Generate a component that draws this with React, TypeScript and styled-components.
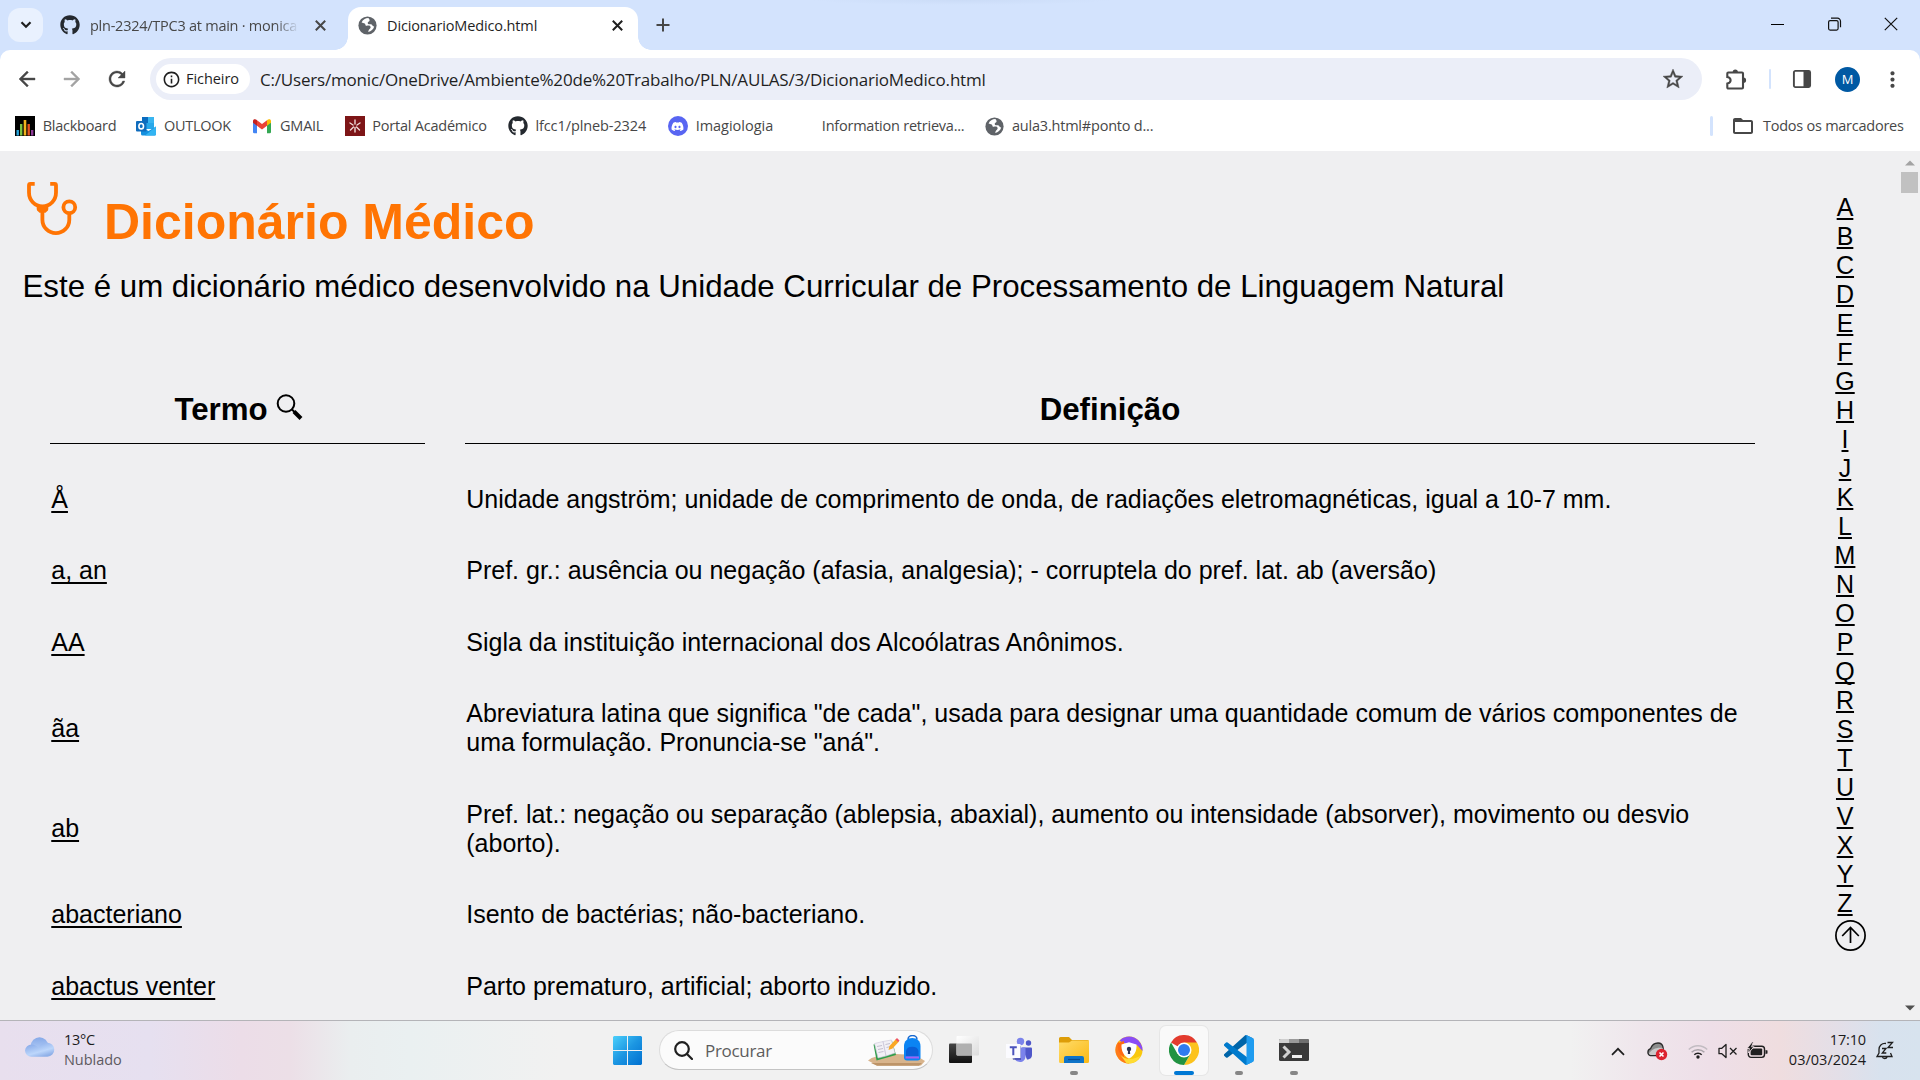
import React from "react";
import styled, { createGlobalStyle, css } from "styled-components";
import { FaGithub, FaDiscord } from "react-icons/fa";
import {
  MdArrowBack,
  MdArrowForward,
  MdRefresh,
  MdStarBorder,
  MdInfoOutline,
  MdMoreVert,
  MdFolderOpen,
} from "react-icons/md";

const UI_FONT = '"Open Sans", "Noto Sans", sans-serif';
const PAGE_FONT = '"Liberation Sans", Arial, sans-serif';

const GlobalStyle = createGlobalStyle`
  *, *::before, *::after { box-sizing: border-box; }
  html, body { margin: 0; padding: 0; overflow: hidden; }
  svg { display: block; flex: none; }
`;

const Screen = styled.div`
  width: 1920px;
  height: 1080px;
  display: flex;
  flex-direction: column;
  overflow: hidden;
  background: #fff;
  font-family: ${UI_FONT};
  color: #1f1f1f;
`;

/* ---------- text ---------- */

const Label = styled.span<{ $w?: number; $size?: number; $ls?: number; $color?: string; $weight?: number }>`
  display: block;
  flex: none;
  ${(p) => p.$w && css`width: ${p.$w}px;`}
  font-size: ${(p) => p.$size ?? 14.5}px;
  letter-spacing: ${(p) => p.$ls ?? -0.3}px;
  color: ${(p) => p.$color ?? "#474747"};
  font-weight: ${(p) => p.$weight ?? 400};
  line-height: 20px;
  white-space: nowrap;
`;

/* ---------- tab strip ---------- */

const TabStrip = styled.header`
  height: 50px;
  flex: none;
  display: flex;
  background: radial-gradient(ellipse 150px 5px at 962px 0, #cbdcf7, #d3e3fd) #d3e3fd;
  padding-left: 8px;
`;

const TabSearch = styled.button`
  width: 35px;
  height: 34px;
  margin-top: 8px;
  border: 0;
  padding: 0;
  border-radius: 12px;
  background: #e9f1fe;
  display: grid;
  place-items: center;
`;

const Tab = styled.div<{ $active?: boolean }>`
  position: relative;
  display: flex;
  align-items: center;
  height: 43px;
  margin-top: 7px;
  padding-bottom: 7px;
  ${(p) =>
    p.$active
      ? css`
          width: 290px;
          padding-left: 10px;
          background: #fff;
          border-radius: 13px 13px 0 0;
          &::before,
          &::after {
            content: "";
            position: absolute;
            bottom: 0;
            width: 13px;
            height: 13px;
          }
          &::before {
            left: -13px;
            background: radial-gradient(circle at 0 0, transparent 12.5px, #fff 13px);
          }
          &::after {
            right: -13px;
            background: radial-gradient(circle at 100% 0, transparent 12.5px, #fff 13px);
          }
        `
      : css`
          width: 305px;
          padding-left: 17px;
        `}
`;

const TabTitle = styled(Label)<{ $fade?: boolean }>`
  width: 211px;
  margin-left: 10px;
  padding-top: 1px;
  overflow: hidden;
  ${(p) => p.$fade && css`mask-image: linear-gradient(to right, #000 185px, transparent 209px);`}
`;

const TabClose = styled.span<{ $left: number }>`
  margin-left: ${(p) => p.$left}px;
`;

const NewTab = styled.span`
  margin: 18px 0 0 18px;
`;

const WindowButtons = styled.div`
  margin-left: auto;
  width: 149px;
  display: flex;
  justify-content: space-between;
  padding: 17px 22px 0 0;
`;

/* ---------- toolbar ---------- */

const ToolbarBack = styled.div`
  flex: none;
  background: #d3e3fd;
`;

const boldIcon = css`
  svg path:not([fill="none"]) {
    stroke: currentColor;
    stroke-width: 0.4px;
  }
`;

const Toolbar = styled.div`
  height: 58px;
  display: flex;
  align-items: center;
  background: #fff;
  border-radius: 10px 10px 0 0;
`;

const NavButtons = styled.nav`
  width: 150px;
  display: flex;
  align-items: center;
  gap: 21px;
  padding-left: 15px;
  color: #474747;
  svg path[fill="none"] {
    stroke: none;
  }
  ${boldIcon}
`;

const Omnibox = styled.div`
  width: 1552px;
  height: 42px;
  border-radius: 21px;
  background: #ebeef8;
  display: flex;
  align-items: center;
  padding: 0 17px 0 6px;
  color: #474747;
`;

const FileChip = styled.span`
  width: 94px;
  height: 30px;
  border-radius: 15px;
  background: #fff;
  display: flex;
  align-items: center;
  gap: 5px;
  padding-left: 6px;
  margin-right: 10px;
  color: #1f1f1f;
`;

const UrlText = styled(Label)`
  flex: 1;
  line-height: 24px;
  padding-top: 1px;
`;

const StarButton = styled.span`
  ${boldIcon}
`;

const ToolbarActions = styled.div`
  flex: 1;
  display: flex;
  align-items: center;
  color: #474747;
  padding-left: 22px;
`;

const Separator = styled.span<{ $w?: number; $ml: number; $mr: number }>`
  flex: none;
  width: ${(p) => p.$w ?? 2}px;
  height: 20px;
  border-radius: 2px;
  background: #d3e3fd;
  margin: 0 ${(p) => p.$mr}px 0 ${(p) => p.$ml}px;
`;

const Avatar = styled.span`
  width: 25px;
  height: 25px;
  border-radius: 50%;
  background: #0059a3;
  color: #fff;
  font-size: 13px;
  display: grid;
  place-items: center;
  margin: 0 20px 0 23px;
`;

const Bookmarks = styled.div`
  height: 43px;
  flex: none;
  display: flex;
  align-items: center;
  background: #fff;
  padding: 0 0 7px 15px;
`;

const Bookmark = styled.a`
  display: flex;
  align-items: center;
  gap: 7.7px;
  margin-right: 19.5px;
`;

const IconSlot = styled.span`
  width: 20px;
  height: 20px;
  display: grid;
  place-items: center;
`;

const AllBookmarks = styled.div`
  margin-left: auto;
  width: 210px;
  display: flex;
  align-items: center;
  color: #474747;
`;

const AllBookmarksLabel = styled(Label)`
  margin-left: 8px;
`;

/* ---------- page ---------- */

const Page = styled.main`
  height: 869px;
  flex: none;
  display: flex;
  overflow: hidden;
  background: #efeff1;
  font-family: ${PAGE_FONT};
  color: #000;
`;

const Content = styled.div`
  width: 1795px;
  flex: none;
`;

const Title = styled.h1`
  display: flex;
  align-items: flex-start;
  margin: 0;
  padding: 28px 0 0 25px;
  height: 118px;
  color: #ff7403;
  font-size: 50px;
  line-height: 58px;
  font-weight: 700;
`;

const TitleText = styled.span`
  margin: 14px 0 0 25px;
`;

const Subtitle = styled.p`
  margin: 0;
  padding: 0 0 0 22.5px;
  font-size: 31.25px;
  line-height: 36px;
  white-space: nowrap;
`;

const Terms = styled.table`
  width: 1785px;
  margin: 36px 0 0 10px;
  table-layout: fixed;
  border-collapse: separate;
  border-spacing: 40px;
  font-size: 25px;
  line-height: 29px;
`;

const Head = styled.th<{ $w: number }>`
  width: ${(p) => p.$w}px;
  height: 63px;
  padding: 0 0 15px;
  border-bottom: 1px solid #000;
  font-size: 31.25px;
  line-height: 36px;
  vertical-align: bottom;
`;

const HeadInner = styled.span`
  display: flex;
  justify-content: center;
  gap: 8px;
  padding-left: 2px;
`;

const Cell = styled.td`
  padding: 0.75px 1.25px 1.75px;
  vertical-align: middle;
`;

const Term = styled.a`
  text-decoration: underline;
  text-decoration-thickness: 2px;
  text-underline-offset: 3px;
`;

const LetterIndex = styled.aside`
  width: 105px;
  display: flex;
  flex-direction: column;
  align-items: center;
  padding: 42px 5px 0 0;
  font-size: 25px;
  line-height: 29px;
`;

const Letter = styled.a`
  height: 29px;
  text-decoration: underline;
  text-decoration-thickness: 2px;
  text-decoration-skip-ink: none;
  text-underline-offset: 2px;
`;

const ToTop = styled.span`
  margin: 2px 0 0 11px;
`;

const Scrollbar = styled.div`
  width: 20px;
  background: #f0f0f1;
  display: flex;
  flex-direction: column;
  align-items: center;
  padding: 9px 1px 9px 0;
`;

const Thumb = styled.div`
  width: 17px;
  height: 21px;
  margin: 6px 0 auto;
  background: #c1c1c1;
`;

/* ---------- taskbar ---------- */

const Taskbar = styled.footer`
  height: 60px;
  flex: none;
  display: flex;
  border-top: 1px solid #b4b4b8;
  background: linear-gradient(
    90deg,
    #e8dfee 0,
    #e6e0f0 150px,
    #ecdde8 240px,
    #ecdfe7 290px,
    #eaeeef 350px,
    #eaf0f1 410px,
    #f1f1f1 560px,
    #f1f1f1 1570px,
    #efe6ec 1640px,
    #eedfe8 1710px,
    #efdddf 1780px,
    #e3dfe8 1840px,
    #d8e2ee 1880px,
    #d7e3ee 1920px
  );
`;

const Weather = styled.div`
  width: 613px;
  display: flex;
  gap: 9px;
  padding: 9px 0 0 25px;
`;

const Pinned = styled.div`
  flex: 1;
  display: flex;
`;

const StartButton = styled.span`
  width: 46px;
  padding-top: 15px;
`;

const SearchBox = styled.div`
  width: 274px;
  height: 40px;
  margin-top: 9px;
  border: 1px solid #dcdcdc;
  border-bottom-color: #c4c4c4;
  border-radius: 20px;
  background: #fbfbfb;
  display: flex;
  align-items: center;
  padding-left: 14px;
`;

const SearchText = styled(Label)`
  margin-left: 12px;
  padding-top: 1px;
  line-height: 24px;
`;

const AppSlot = styled.div<{ $w: number; $active?: boolean }>`
  width: ${(p) => p.$w}px;
  height: 49px;
  margin-top: 5px;
  display: flex;
  flex-direction: column;
  align-items: center;
  justify-content: space-between;
  padding-top: 9px;
  ${(p) =>
    p.$active &&
    css`
      margin-left: 6px;
      border-radius: 6px;
      background: #f9f9f9;
      box-shadow: 0 0 0 1px #e6e6e6;
    `}
`;

const RunningDot = styled.i<{ $active?: boolean }>`
  width: ${(p) => (p.$active ? 20 : 8)}px;
  height: 4px;
  border-radius: 2px;
  background: ${(p) => (p.$active ? "#0078d4" : "#868686")};
`;

const Tray = styled.div`
  width: 309px;
  display: flex;
  align-items: flex-start;
  padding-top: 19px;
`;

const TrayItem = styled.span<{ $w: number }>`
  width: ${(p) => p.$w}px;
  height: 22px;
  display: flex;
  align-items: center;
`;

const Clock = styled.div`
  width: 98px;
  margin-top: -10px;
  display: flex;
  flex-direction: column;
  align-items: flex-end;
`;

const BellPad = styled.span`
  padding-left: 10px;
`;

/* ---------- icons ---------- */

const Cross = ({ size = 11, w = 2, color = "#1f1f1f" }) => (
  <svg width={size} height={size} viewBox="0 0 11 11" stroke={color} strokeWidth={w}>
    <path d="M.8.8l9.4 9.4M10.2.8L.8 10.2" />
  </svg>
);

const Globe = () => (
  <svg width="19" height="19" viewBox="0 0 19 19">
    <circle cx="9.5" cy="9.5" r="9.1" fill="#5f6368" />
    <path
      d="M10.4 2.1c-3 .1-5.6 1.7-6.8 4.3 1.2.6 2 .3 3.1 1 1 .7.3 1.9 1.3 2.3 1.2.4 2.7-.6 4 .2 1.1.8.7 2.2-.3 3.1-.9.8-1.3 1.6-1.4 2.9 2.7-.5 5.2-2.5 5.9-5.3-1.500-.3-1.800-1.300-2.600-2-.9-.7-2.400.1-3.400-.7-1.100-1-.1-2.300 1-2.700.9-.4.3-1.900-.8-3.100z"
      fill="#fff"
    />
  </svg>
);

const Blackboard = () => (
  <svg width="20" height="20" viewBox="0 0 20 20">
    <rect width="20" height="20" fill="#000" />
    <rect x="1.5" y="14" width="2.4" height="5.5" fill="#29a8e0" />
    <rect x="5" y="8" width="2.4" height="11.5" fill="#7ac142" />
    <rect x="8.7" y="4" width="2.6" height="15.5" fill="#f0b31c" />
    <rect x="12.5" y="8" width="2.4" height="11.5" fill="#e5541f" />
    <rect x="16" y="14" width="2.4" height="5.5" fill="#8e3a97" />
  </svg>
);

const Outlook = () => (
  <svg width="20" height="20" viewBox="0 0 20 20">
    <rect x="6" y="1" width="12" height="12" rx="1" fill="#28a8ea" />
    <path d="M6 1h6v6H6z" fill="#0a6cc0" />
    <path d="M12 1h6v6h-6z" fill="#39b5f0" />
    <path d="M5 11l7.5 4L20 10.500V18a1.500 1.500 0 0 1-1.500 1.500H6.500A1.500 1.500 0 0 1 5 18z" fill="#1490df" />
    <path d="M20 10.500V18a1.500 1.500 0 0 1-1.500 1.500H9z" fill="#32b4f2" />
    <rect y="5" width="10.5" height="10.5" rx="1" fill="#0f6cbd" />
    <ellipse cx="5.2" cy="10.2" rx="2.3" ry="2.7" fill="none" stroke="#fff" strokeWidth="1.6" />
  </svg>
);

const Gmail = () => (
  <svg width="20" height="16" viewBox="0 0 20 16">
    <path d="M1 3v11a1.200 1.200 0 0 0 1.200 1.200H5V6.500z" fill="#4285f4" />
    <path d="M19 3v11a1.200 1.200 0 0 1-1.200 1.200H15V6.500z" fill="#34a853" />
    <path d="M15 2.300l1-.8a1.900 1.900 0 0 1 3 1.500v1.800L15 7.800z" fill="#fbbc04" />
    <path d="M5 7.800V2.300l5 3.800 5-3.800v5.500l-5 3.800z" fill="#ea4335" />
    <path d="M1 4.800V3a1.900 1.900 0 0 1 3-1.500l1 .8v5.500z" fill="#c5221f" />
  </svg>
);

const Portal = () => (
  <svg width="20" height="20" viewBox="0 0 20 20">
    <rect width="20" height="20" fill="#7d1517" />
    <g stroke="#f0dcd8" strokeWidth="1.4" strokeLinecap="round">
      <path d="M10 4v4M5 7l3 2M15 7l-3 2M10 11.500v4.500M8.500 11L5.500 14M11.500 11l3 3" />
    </g>
  </svg>
);

const Discord = styled.span`
  width: 20px;
  height: 20px;
  border-radius: 50%;
  background: #5865f2;
  color: #fff;
  display: grid;
  place-items: center;
`;

const Puzzle = () => (
  <svg width="25" height="25" viewBox="0 0 25 25">
    <path
      d="M5.500 5.500H18a1 1 0 0 1 1 1V20.500a1 1 0 0 1-1 1H4.300a1 1 0 0 1-1-1V16.500C5.600 16 6.600 14.800 6.600 13.200S5.600 10.400 3.300 10V6.500a1 1 0 0 1 1-1z"
      fill="none"
      stroke="#474747"
      strokeWidth="2.1"
    />
    <path d="M8.700 5a2.600 2.600 0 0 1 5.200 0zM19.500 10.600a2.600 2.600 0 0 1 0 5.200z" fill="#474747" />
  </svg>
);

const SidePanel = () => (
  <svg width="20" height="20" viewBox="0 0 20 20">
    <rect x="1.9" y="1.9" width="16.2" height="16.2" rx="1.5" fill="none" stroke="#474747" strokeWidth="1.9" />
    <path d="M11.500 1.900h6.600v16.200h-6.600z" fill="#474747" />
  </svg>
);

const Stethoscope = () => (
  <svg width="54" height="58" viewBox="0 0 54 58" fill="none" stroke="#ff7403" strokeWidth="3.8">
    <path d="M9.700 4.900H5.400Q4 4.900 4 6.400V13.500C4 21 9.500 27.300 17.500 27.300S31 21 31 13.500V6.400Q31 4.900 29.600 4.900H25.200" />
    <path d="M17.400 33V40.700a13.450 13.450 0 0 0 26.900 0V35" />
    <circle cx="44.3" cy="28.3" r="5.9" />
    <path d="M11.700 28.200q0-2.200 2.200-2.200h7.200q2.200 0 2.200 2.200v1.800q0 1.500-1.500 2.500l-1.300 1.300H14.500l-1.300-1.300q-1.500-1-1.500-2.500z" fill="#ff7403" stroke="none" />
  </svg>
);

const Magnifier = () => (
  <svg width="27" height="28" viewBox="0 0 27 28" fill="none" stroke="#000">
    <circle cx="10" cy="11.5" r="8.3" strokeWidth="2" />
    <path d="M15.500 17l3.500 3.500" strokeWidth="2" />
    <path d="M18 19.500l7 7" strokeWidth="4" />
  </svg>
);

const ArrowUpCircle = () => (
  <svg width="31" height="31" viewBox="0 0 31 31" fill="none" stroke="#000" strokeWidth="1.7">
    <circle cx="15.5" cy="15.5" r="14.6" />
    <path d="M15.500 23V7.600M7.200 16l8.300-8.500 8.300 8.500" />
  </svg>
);

const CloudIcon = () => (
  <svg width="30" height="27" viewBox="0 -7 30 27">
    <defs>
      <linearGradient id="cloudA" x1="0" y1="0" x2="0" y2="1">
        <stop offset="0" stopColor="#86a9e8" />
        <stop offset="1" stopColor="#c2d9fb" />
      </linearGradient>
      <linearGradient id="cloudB" x1="0" y1="0" x2="0.6" y2="1">
        <stop offset="0" stopColor="#7b9fe4" />
        <stop offset=".7" stopColor="#bcd6fb" />
        <stop offset="1" stopColor="#8fb0e8" />
      </linearGradient>
    </defs>
    <circle cx="14.5" cy="9" r="8.7" fill="url(#cloudA)" />
    <path d="M0 13.500A6.500 6.500 0 0 1 6.500 7.500c3.500 0 5 1.500 7 3.200C15.500 7 18.500 5.700 22 5.700a7 7 0 0 1 .5 14H6.500A6.300 6.300 0 0 1 0 13.500z" fill="url(#cloudB)" />
  </svg>
);

const WindowsLogo = () => (
  <svg width="29" height="29" viewBox="0 0 29 29">
    <defs>
      <linearGradient id="win" x1="0" y1="0" x2="1" y2="1">
        <stop offset="0" stopColor="#4cd0fb" />
        <stop offset=".5" stopColor="#1c96e2" />
        <stop offset="1" stopColor="#0070d0" />
      </linearGradient>
    </defs>
    <path d="M1 0h13v14H0V1zM15 0h13l1 1v13H15zM0 15h14v14H1l-1-1zM15 15h14v13l-1 1H15z" fill="url(#win)" />
  </svg>
);

const SearchArt = () => (
  <svg width="57" height="31" viewBox="0 0 57 31">
    <path d="M0 25.500Q8 19 28 19t29 7l-4 4.500H9z" fill="#d8b48c" />
    <path d="M3 28h51l-3 2.800H9z" fill="#bd9468" />
    <path d="M5.500 9.500L24 6l4 14-19.500 5.500z" fill="#2f9e49" />
    <path d="M6.500 8.500L15 6.500l3 14.500-8 2zM15 6.500l8.500-1.500 3.500 13-9 3z" fill="#f2f0f6" stroke="#c9c5d6" strokeWidth=".6" />
    <path d="M9 11.500l5-1M10 14.500l5-1M10.500 17.500l5-1M17.500 9.500l4.500-1M18.500 12.500l4-1" stroke="#b7b3c6" strokeWidth=".8" />
    <path d="M20.500 15l1-4L28 4l3 2.500-6.500 7z" fill="#f9a825" />
    <path d="M27.500 4.500l1.500-1.500 2.500 2.500-1.500 1.500z" fill="#ef5466" />
    <path d="M40 4.500a4.500 4 0 0 1 9 0" fill="none" stroke="#1767cf" strokeWidth="1.5" />
    <path d="M36 11c0-5 3.500-8 8.300-8S52.500 6 52.500 11v11.500a3 3 0 0 1-3 3H39a3 3 0 0 1-3-3z" fill="#0b84f3" />
    <path d="M38 16a6.300 5 0 0 1 12.500 0v5H38z" fill="#0a5fd6" />
    <path d="M37.500 21.500h13.500v2H37.500z" fill="#a45df0" />
  </svg>
);

const TaskView = () => (
  <svg width="31" height="30" viewBox="0 0 31 30">
    <defs>
      <linearGradient id="tv" x1="0" y1="0" x2="0" y2="1">
        <stop offset="0" stopColor="#454545" />
        <stop offset="1" stopColor="#111" />
      </linearGradient>
      <linearGradient id="tvl" x1="0" y1="0" x2="1" y2="1">
        <stop offset="0" stopColor="#fff" />
        <stop offset="1" stopColor="#dcdcdc" />
      </linearGradient>
    </defs>
    <rect x="0" y="8.5" width="23" height="19.5" rx="1" fill="url(#tv)" />
    <rect x="7.5" y="1" width="22.5" height="19.5" rx="1" fill="url(#tvl)" />
    <path d="M7.500 8.500H22q1 0 1 1v11H8.500q-1 0-1-1z" fill="#b0b0b0" />
  </svg>
);

const Teams = () => (
  <svg width="28" height="28" viewBox="0 0 28 28">
    <circle cx="23.5" cy="8" r="2.7" fill="#4f57c9" />
    <path d="M17 12.500h9a1 1 0 0 1 1 1V20c0 3-2.500 4.500-5 4.500z" fill="#4f57c9" />
    <circle cx="15.5" cy="6.5" r="3.7" fill="#7b83eb" />
    <path d="M9 12.500h11.500V21c0 4-2.700 6-5.500 6s-6-2-6-6z" fill="#7b83eb" />
    <path d="M5 11h11v14H8z" fill="#303594" opacity=".55" />
    <rect x="1" y="9" width="14.5" height="14" fill="#fbfbff" />
    <path d="M4.800 12.300h7M8.300 12.300v8" stroke="#4b53bc" strokeWidth="2" fill="none" />
  </svg>
);

const Explorer = () => (
  <svg width="30" height="30" viewBox="0 0 30 30">
    <defs>
      <linearGradient id="fold" x1="0" y1="0" x2="1" y2="1">
        <stop offset="0" stopColor="#ffdc6a" />
        <stop offset="1" stopColor="#fbb914" />
      </linearGradient>
    </defs>
    <path d="M0 3.500A1.500 1.500 0 0 1 1.500 2h8.500l3 3h15.500A1.500 1.500 0 0 1 30 6.500V12H0z" fill="#dd9d08" />
    <path d="M0 7.500h10l3-2h17v21a1.500 1.500 0 0 1-1.500 1.500h-27A1.500 1.500 0 0 1 0 26.500z" fill="url(#fold)" />
    <path d="M5 28v-5a2 2 0 0 1 2-2h16a2 2 0 0 1 2 2v5z" fill="#0f74c8" />
    <path d="M9 24.500h12" stroke="#0a4d90" strokeWidth="1.2" />
  </svg>
);

const SecureBrowser = () => (
  <svg width="28" height="29" viewBox="0 0 28 29">
    <circle cx="14" cy="15" r="13.5" fill="#f9c80e" />
    <path d="M14 28.500A13.500 13.500 0 0 1 4 6c-1 8 2 15 10 18z" fill="#ff7a1a" />
    <path d="M4.500 5.500A13.500 13.500 0 0 1 27.500 16L22 10 8 8z" fill="#8a4df5" />
    <path d="M3 8L9 6v16c-5-3-7-8-6-14z" fill="#ff6a13" />
    <path d="M5.500 20c6 6 14 4 20 1-3 6-9 8-14 7.300z" fill="#ffdc33" />
    <path d="M6.500 9.500l7.500-2.200 7.500 2.200c.5 6-2 11.500-7.500 14C8.500 21 6 15.500 6.500 9.500z" fill="#fdfdff" />
    <circle cx="14" cy="14" r="2.2" fill="#2b3152" />
    <path d="M13.200 14h1.600l.4 5h-2.400z" fill="#2b3152" />
  </svg>
);

const Chrome = () => (
  <svg width="30" height="30" viewBox="0 0 48 48">
    <path d="M24 24L3.200 12A24 24 0 0 1 44.800 12z" fill="#e33b2e" />
    <path d="M44.800 12A24 24 0 0 1 24 48L34.400 30 24 12z" fill="#fcc31e" />
    <path d="M3.200 12A24 24 0 0 0 24 48l10.400-18L24 24l-10.400 6z" fill="#229342" />
    <circle cx="24" cy="24" r="12" fill="#fff" />
    <circle cx="24" cy="24" r="9.6" fill="#2f7bf0" />
  </svg>
);

const VsCode = () => (
  <svg width="30" height="30" viewBox="0 0 100 100">
    <path d="M96.500 10.800L75.900.9a6.200 6.200 0 0 0-7.100 1.200L1.300 63.600a4.200 4.200 0 0 0 0 6.100l5.500 5a4.200 4.200 0 0 0 5.300.3L93.400 13.300c2.700-2 6.600-.1 6.600 3.300v-.2a6.300 6.300 0 0 0-3.500-5.600z" fill="#0065a9" />
    <path d="M96.500 89.200l-20.600 9.900a6.200 6.200 0 0 1-7.100-1.200L1.300 36.400a4.200 4.200 0 0 1 0-6.100l5.500-5a4.200 4.200 0 0 1 5.300-.3l81.300 61.700c2.700 2 6.600.1 6.600-3.300v.2a6.300 6.300 0 0 1-3.500 5.600z" fill="#007acc" />
    <path d="M75.900 99.100a6.200 6.200 0 0 1-7.100-1.200c2.300 2.300 6.200.7 6.200-2.600V4.700c0-3.300-3.900-4.900-6.200-2.600a6.200 6.200 0 0 1 7.100-1.200l20.600 9.900A6.300 6.300 0 0 1 100 16.400v67.200a6.300 6.300 0 0 1-3.500 5.600z" fill="#1f9cf0" />
  </svg>
);

const Terminal = () => (
  <svg width="30" height="30" viewBox="0 0 30 30">
    <rect y="4" width="30" height="22" rx="1.5" fill="#3a3a3a" />
    <path d="M0 8V5.500A1.500 1.500 0 0 1 1.500 4H10v4z" fill="#cfcfcf" />
    <path d="M10 4h10v4H10z" fill="#9a9a9a" />
    <path d="M20 4h8.500A1.500 1.500 0 0 1 30 5.500V8H20z" fill="#6f6f6f" />
    <path d="M4.500 11.500l5.500 5.500-5.500 5.500" fill="none" stroke="#d0d0d0" strokeWidth="3" />
    <rect x="13" y="20" width="10" height="3" fill="#f0f0f0" />
  </svg>
);

const SyncError = () => (
  <svg width="21" height="20" viewBox="0 0 21 20">
    <path d="M3.500 14.500C1.500 14 .9 12.500.9 11.200c0-1.700 1-2.900 2.600-3.500C5 3.700 8 2 11 2c2.600 0 4.600 1.700 5 4.200l1 8.300z" fill="#8d8d8d" stroke="#2a2a2a" strokeWidth="1.3" />
    <path d="M1.800 12.500C5 8.500 9 6.300 15.500 7l1 6.900H3.800q-1.500-.3-2-1.400z" fill="#c9c9c9" />
    <circle cx="14.5" cy="13.5" r="5.7" fill="#dc2430" />
    <path d="M12.500 11.500l4 4M16.500 11.500l-4 4" stroke="#fff" strokeWidth="1.6" />
  </svg>
);

const Wifi = () => (
  <svg width="20" height="18" viewBox="0 0 20 18" fill="none" strokeWidth="1.5">
    <path d="M.8 7.500a13 13 0 0 1 18.400 0" stroke="#c2bcc2" />
    <path d="M3.600 10.300a9 9 0 0 1 12.800 0" stroke="#a9a3a9" />
    <path d="M6.300 12.700a5.300 5.300 0 0 1 7.400 0" stroke="#1f1f1f" />
    <circle cx="10" cy="15" r="1.7" fill="#1f1f1f" />
  </svg>
);

const Muted = () => (
  <svg width="20" height="16" viewBox="0 0 20 16" fill="none" stroke="#1f1f1f" strokeWidth="1.3">
    <path d="M1 5.300h2.800L8 1.500v13L3.800 10.700H1z" strokeLinejoin="round" />
    <path d="M12 5l6.500 6.500M18.500 5L12 11.500" />
  </svg>
);

const Battery = () => (
  <svg width="21" height="18" viewBox="0 0 21 18">
    <rect x="1.3" y="4.2" width="16.2" height="11.2" rx="2.8" fill="none" stroke="#1f1f1f" strokeWidth="1.4" />
    <rect x="3.6" y="6.5" width="11.6" height="6.7" rx="1" fill="#1f1f1f" />
    <path d="M18.500 8l2 .5v3l-2 .5z" fill="#1f1f1f" />
    <path d="M5.500-.5L0 6.500h2.300L1.500 11 7 4.800H4.600L6.500-.5z" fill="#1f1f1f" stroke="#efdfe4" strokeWidth=".9" />
  </svg>
);

const QuietBell = () => (
  <svg width="18" height="20" viewBox="0 0 18 20" fill="none" stroke="#1f1f1f" strokeWidth="1.3">
    <path d="M10 2.500C5.500 2 3 5 3 8.500V12L1 15.500h15L14.500 12M6.500 16c.3 2 4 2 4.500 0" />
    <path d="M6 7.500h4L6.300 12h4M11.500 1.500h5L12 6.500h5" />
  </svg>
);

/* ---------- data ---------- */

const bookmarks: { label: string; icon: React.ReactNode; w: number; ls: number }[] = [
  { label: "Blackboard", icon: <Blackboard />, w: 74, ls: -0.25 },
  { label: "OUTLOOK", icon: <Outlook />, w: 69, ls: -0.25 },
  { label: "GMAIL", icon: <Gmail />, w: 45, ls: -0.25 },
  { label: "Portal Académico", icon: <Portal />, w: 116, ls: -0.22 },
  { label: "lfcc1/plneb-2324", icon: <FaGithub size={20} color="#24292f" />, w: 113, ls: -0.1 },
  { label: "Imagiologia", icon: <Discord><FaDiscord size={13} /></Discord>, w: 79, ls: -0.02 },
  { label: "Information retrieva...", icon: null, w: 143, ls: -0.23 },
  { label: "aula3.html#ponto d...", icon: <Globe />, w: 142, ls: -0.21 },
];

const terms: [string, string][] = [
  ["Å", "Unidade angström; unidade de comprimento de onda, de radiações eletromagnéticas, igual a 10-7 mm."],
  ["a, an", "Pref. gr.: ausência ou negação (afasia, analgesia); - corruptela do pref. lat. ab (aversão)"],
  ["AA", "Sigla da instituição internacional dos Alcoólatras Anônimos."],
  ["ãa", 'Abreviatura latina que significa "de cada", usada para designar uma quantidade comum de vários componentes de uma formulação. Pronuncia-se "aná".'],
  ["ab", "Pref. lat.: negação ou separação (ablepsia, abaxial), aumento ou intensidade (absorver), movimento ou desvio (aborto)."],
  ["abacteriano", "Isento de bactérias; não-bacteriano."],
  ["abactus venter", "Parto prematuro, artificial; aborto induzido."],
];

const letters = "ABCDEFGHIJKLMNOPQRSTUVXYZ".split("");

export default function App() {
  return (
    <Screen>
      <GlobalStyle />
      <TabStrip>
        <TabSearch>
          <svg width="12" height="8" viewBox="0 0 12 8" fill="none" stroke="#1f1f1f" strokeWidth="2.2">
            <path d="M1.500 1.200L6 5.700l4.500-4.500" />
          </svg>
        </TabSearch>
        <Tab>
          <FaGithub size={20} color="#24292f" />
          <TabTitle $fade $ls={-0.25}>pln-2324/TPC3 at main · monica</TabTitle>
          <TabClose $left={14}><Cross color="#474747" /></TabClose>
        </Tab>
        <Tab $active>
          <Globe />
          <TabTitle $color="#1f1f1f" $ls={-0.14}>DicionarioMedico.html</TabTitle>
          <TabClose $left={14}><Cross /></TabClose>
        </Tab>
        <NewTab>
          <svg width="14" height="14" viewBox="0 0 14 14" stroke="#474747" strokeWidth="2">
            <path d="M7 .5v13M.5 7h13" />
          </svg>
        </NewTab>
        <WindowButtons>
          <svg width="14" height="14" viewBox="0 0 14 14"><path d="M0 7.500h13" stroke="#000" /></svg>
          <svg width="14" height="14" viewBox="0 0 14 14" fill="none" stroke="#111" strokeWidth="1.2">
            <rect x="0.6" y="3.6" width="9.5" height="9.5" rx="1.5" />
            <path d="M3 1.200h6.500a3 3 0 0 1 3 3v6" />
          </svg>
          <svg width="14" height="14" viewBox="0 0 14 14" stroke="#111" strokeWidth="1.2">
            <path d="M.8.8l12.400 12.400M13.200.8L.8 13.200" />
          </svg>
        </WindowButtons>
      </TabStrip>

      <ToolbarBack>
        <Toolbar>
          <NavButtons>
            <MdArrowBack size={24} />
            <MdArrowForward size={24} color="#a3a3a3" />
            <MdRefresh size={24} />
          </NavButtons>
          <Omnibox>
            <FileChip>
              <MdInfoOutline size={19} />
              <Label $color="#1f1f1f" $weight={500} $ls={-0.05}>Ficheiro</Label>
            </FileChip>
            <UrlText $size={17} $ls={-0.19} $color="#1f1f1f">
              C:/Users/monic/OneDrive/Ambiente%20de%20Trabalho/PLN/AULAS/3/DicionarioMedico.html
            </UrlText>
            <StarButton><MdStarBorder size={24} /></StarButton>
          </Omnibox>
          <ToolbarActions>
            <Puzzle />
            <Separator $ml={20} $mr={21} />
            <SidePanel />
            <Avatar>M</Avatar>
            <MdMoreVert size={25} />
          </ToolbarActions>
        </Toolbar>
      </ToolbarBack>

      <Bookmarks>
        {bookmarks.map((b) => (
          <Bookmark key={b.label}>
            <IconSlot>{b.icon}</IconSlot>
            <Label $w={b.w} $ls={b.ls}>{b.label}</Label>
          </Bookmark>
        ))}
        <AllBookmarks>
          <Separator $w={3} $ml={0} $mr={18} />
          <MdFolderOpen size={24} />
          <AllBookmarksLabel $ls={-0.25}>Todos os marcadores</AllBookmarksLabel>
        </AllBookmarks>
      </Bookmarks>

      <Page>
        <Content>
          <Title>
            <Stethoscope />
            <TitleText>Dicionário Médico</TitleText>
          </Title>
          <Subtitle>Este é um dicionário médico desenvolvido na Unidade Curricular de Processamento de Linguagem Natural</Subtitle>
          <Terms>
            <thead>
              <tr>
                <Head $w={375}><HeadInner>Termo <Magnifier /></HeadInner></Head>
                <Head $w={1290}>Definição</Head>
              </tr>
            </thead>
            <tbody>
              {terms.map(([term, definition]) => (
                <tr key={term}>
                  <Cell><Term>{term}</Term></Cell>
                  <Cell>{definition}</Cell>
                </tr>
              ))}
            </tbody>
          </Terms>
        </Content>
        <LetterIndex>
          {letters.map((l) => <Letter key={l}>{l}</Letter>)}
          <ToTop><ArrowUpCircle /></ToTop>
        </LetterIndex>
        <Scrollbar>
          <svg width="10" height="6" viewBox="0 0 10 6"><path d="M0 5.500L5 .5l5 5z" fill="#a3a3a3" /></svg>
          <Thumb />
          <svg width="10" height="6" viewBox="0 0 10 6"><path d="M0 .5L5 5.500l5-5z" fill="#505050" /></svg>
        </Scrollbar>
      </Page>

      <Taskbar>
        <Weather>
          <CloudIcon />
          <div>
            <Label $color="#1b1b1b">13°C</Label>
            <Label $color="#5d5a60" $ls={-0.05}>Nublado</Label>
          </div>
        </Weather>
        <Pinned>
          <StartButton><WindowsLogo /></StartButton>
          <SearchBox>
            <svg width="19" height="19" viewBox="0 0 19 19" fill="none" stroke="#1f1f1f" strokeWidth="2.2">
              <circle cx="8" cy="8" r="6.8" />
              <path d="M13 13l5 5" strokeLinecap="round" />
            </svg>
            <SearchText $size={17} $color="#5d5d5d" $w={163}>Procurar</SearchText>
            <SearchArt />
          </SearchBox>
          <AppSlot $w={62}><TaskView /></AppSlot>
          <AppSlot $w={48}><Teams /></AppSlot>
          <AppSlot $w={61}><Explorer /><RunningDot /></AppSlot>
          <AppSlot $w={50}><SecureBrowser /></AppSlot>
          <AppSlot $w={48} $active><Chrome /><RunningDot $active /></AppSlot>
          <AppSlot $w={62}><VsCode /><RunningDot /></AppSlot>
          <AppSlot $w={48}><Terminal /><RunningDot /></AppSlot>
        </Pinned>
        <Tray>
          <TrayItem $w={36}>
            <svg width="14" height="9" viewBox="0 0 14 9" fill="none" stroke="#1f1f1f" strokeWidth="1.7"><path d="M1 7.800l6-6 6 6" /></svg>
          </TrayItem>
          <TrayItem $w={41}><SyncError /></TrayItem>
          <TrayItem $w={30}><Wifi /></TrayItem>
          <TrayItem $w={29}><Muted /></TrayItem>
          <TrayItem $w={21}><Battery /></TrayItem>
          <Clock>
            <Label $color="#1b1b1b" $ls={-0.15}>17:10</Label>
            <Label $color="#1b1b1b" $ls={0.02}>03/03/2024</Label>
          </Clock>
          <TrayItem $w={40}><BellPad><QuietBell /></BellPad></TrayItem>
        </Tray>
      </Taskbar>
    </Screen>
  );
}
